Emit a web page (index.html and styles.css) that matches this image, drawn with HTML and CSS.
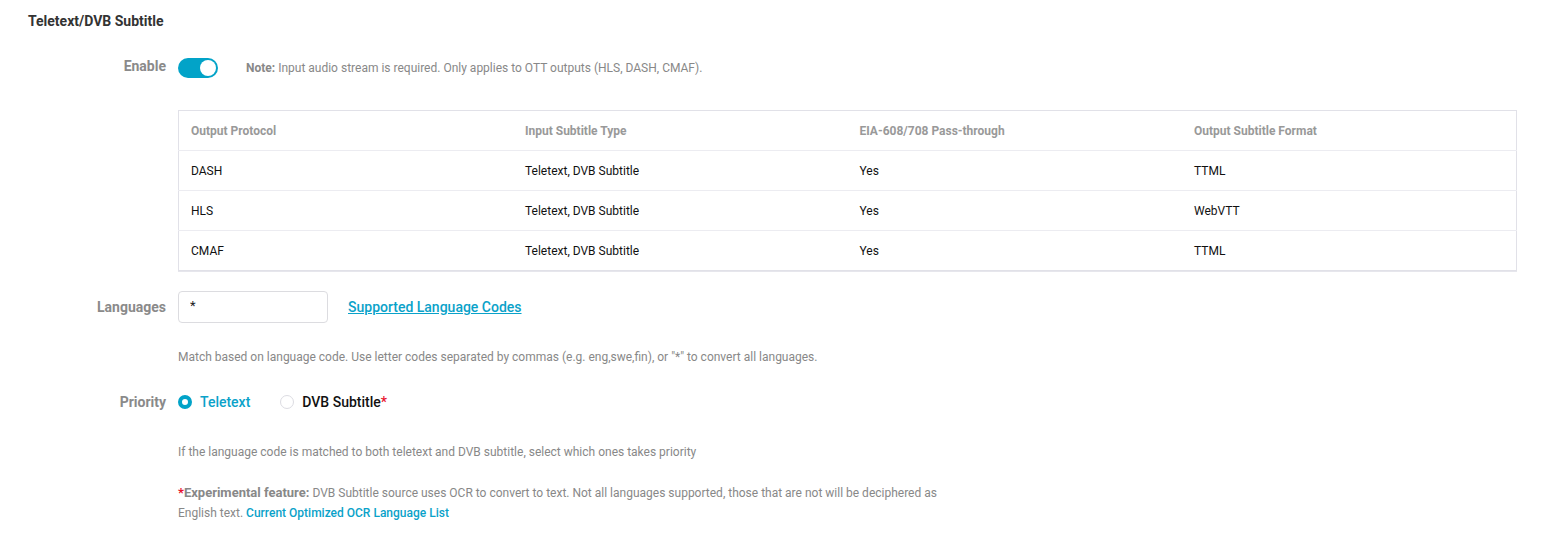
FILE: index.html
```html
<!DOCTYPE html>
<html>
<head>
<meta charset="utf-8">
<link rel="stylesheet" href="styles.css">
</head>
<body>
<div class="page">
  <h2 class="title">Teletext/DVB Subtitle</h2>

  <div class="row row-enable">
    <div class="label">Enable</div>
    <div class="content">
      <div class="enable-line">
        <span class="toggle"><span class="knob"></span></span>
        <span class="note"><b>Note:</b> Input audio stream is required. Only applies to OTT outputs (HLS, DASH, CMAF).</span>
      </div>
      <table class="proto">
        <thead>
          <tr><th>Output Protocol</th><th>Input Subtitle Type</th><th>EIA-608/708 Pass-through</th><th>Output Subtitle Format</th></tr>
        </thead>
        <tbody>
          <tr><td>DASH</td><td>Teletext, DVB Subtitle</td><td>Yes</td><td>TTML</td></tr>
          <tr><td>HLS</td><td>Teletext, DVB Subtitle</td><td>Yes</td><td>WebVTT</td></tr>
          <tr><td>CMAF</td><td>Teletext, DVB Subtitle</td><td>Yes</td><td>TTML</td></tr>
        </tbody>
      </table>
    </div>
  </div>

  <div class="row row-lang">
    <div class="label">Languages</div>
    <div class="content">
      <div class="lang-line">
        <input class="text-input" type="text" value="*">
        <a class="link" href="#">Supported Language Codes</a>
      </div>
      <p class="help help-lang">Match based on language code. Use letter codes separated by commas (e.g. eng,swe,fin), or "*" to convert all languages.</p>
    </div>
  </div>

  <div class="row row-prio">
    <div class="label">Priority</div>
    <div class="content">
      <div class="radios">
        <label class="radio checked"><span class="dot"></span>Teletext</label>
        <label class="radio"><span class="dot"></span>DVB Subtitle<span class="req">*</span></label>
      </div>
      <p class="help help-prio">If the language code is matched to both teletext and DVB subtitle, select which ones takes priority</p>
      <p class="help help-exp"><span class="req req-exp">*</span><b>Experimental feature:</b> DVB Subtitle source uses OCR to convert to text. Not all languages supported, those that are not will be deciphered as<br>English text. <a class="link-small" href="#">Current Optimized OCR Language List</a></p>
    </div>
  </div>
</div>
</body>
</html>
```

FILE: styles.css
```css
html, body {
  margin: 0;
  padding: 0;
  background: #ffffff;
}
body {
  font-family: Roboto, "Liberation Sans", Arial, sans-serif;
  color: #222;
}
.page {
  width: 1551px;
  padding-top: 13px;
}
.title {
  margin: 0 0 0 28px;
  font-size: 14px;
  font-weight: 700;
  color: #333;
  line-height: 17px;
}
.row {
  display: grid;
  grid-template-columns: 166px 1fr;
  column-gap: 12px;
}
.label {
  text-align: right;
  font-size: 14px;
  font-weight: 700;
  color: #8a8a8a;
  line-height: 20px;
}
.content {
  padding-right: 34px;
}
.row-enable {
  margin-top: 28px;
}
.row-enable .label {
  margin-top: -2px;
}
.enable-line {
  display: flex;
  align-items: center;
  height: 20px;
}
.toggle {
  display: inline-block;
  width: 40px;
  height: 20px;
  border-radius: 10px;
  background: #02a3c8;
  position: relative;
  flex: none;
}
.knob {
  position: absolute;
  top: 2px;
  right: 2px;
  width: 16px;
  height: 16px;
  border-radius: 50%;
  background: #fff;
}
.note {
  margin-left: 28px;
  font-size: 12px;
  color: #888;
}
.note b {
  font-weight: 700;
}
.proto {
  margin-top: 32px;
  width: 100%;
  border-collapse: collapse;
  table-layout: fixed;
  border: 1px solid #e1e1e8;
  box-shadow: 0 1px 0 #e6e6ec;
  font-size: 12px;
}
.proto th, .proto td {
  height: 39px;
  padding: 0 12px;
  text-align: left;
  border-bottom: 1px solid #ececf1;
}
.proto tbody tr:last-child td {
  border-bottom: none;
}
.proto th {
  font-weight: 700;
  color: #999;
}
.proto td {
  color: #111;
}
.row-lang {
  margin-top: 20px;
}
.row-lang .label {
  line-height: 32px;
}
.lang-line {
  display: flex;
  align-items: center;
  height: 32px;
}
.text-input {
  box-sizing: border-box;
  width: 150px;
  height: 32px;
  border: 1px solid #dcdce0;
  border-radius: 4px;
  padding: 0 11px 4px;
  font-family: inherit;
  font-size: 13px;
  color: #222;
  outline: none;
}
.link {
  margin-left: 20px;
  font-size: 14px;
  font-weight: 500;
  color: #0aa2c9;
  text-decoration: underline;
}
.help {
  margin: 0;
  font-size: 12px;
  color: #888;
  line-height: 19px;
}
.help-lang {
  margin-top: 25px;
}
.row-prio {
  margin-top: 25px;
}
.radios {
  display: flex;
  align-items: center;
  height: 20px;
}
.radio {
  display: inline-flex;
  align-items: center;
  font-size: 14px;
  font-weight: 500;
  color: #111;
  margin-right: 30px;
}
.radio .dot {
  box-sizing: border-box;
  width: 14px;
  height: 14px;
  border-radius: 50%;
  border: 1px solid #dcdce2;
  background: #fff;
  margin-right: 8px;
}
.radio.checked {
  color: #0aa2c9;
}
.radio.checked .dot {
  border: 4px solid #02a3c8;
  background: #fff;
}
.req {
  color: #e8112d;
}
.help-prio {
  margin-top: 31px;
}
.help-exp {
  margin-top: 21px;
  line-height: 20px;
}
.req-exp {
  font-size: 13px;
  font-weight: 700;
}
.help-exp b {
  font-size: 13px;
  font-weight: 700;
}
.link-small {
  color: #0aa2c9;
  font-weight: 500;
  text-decoration: none;
}
```
